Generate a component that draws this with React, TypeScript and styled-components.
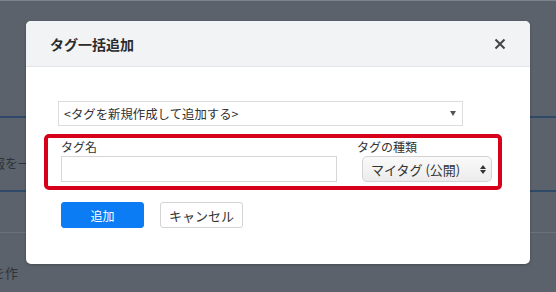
import React from "react";
import styled, { createGlobalStyle } from "styled-components";

const Global = createGlobalStyle`
  html, body { margin: 0; padding: 0; }
  body {
    width: 556px; height: 292px; overflow: hidden;
    font-family: "Noto Sans CJK JP", "Liberation Sans", sans-serif;
  }
`;

const Page = styled.div`
  position: relative;
  width: 556px;
  height: 292px;
  background: #5c626b;
  border-top: 1px solid #7d838b;
  box-sizing: border-box;
  overflow: hidden;
`;

const BgContent = styled.div`
  display: flex;
  flex-direction: column;
  padding-top: 115px;
`;

const BgLine = styled.div<{ $color: string; $h?: number }>`
  height: ${(p) => p.$h ?? 2}px;
  background: ${(p) => p.$color};
`;

const BgText = styled.div<{ $h: number; $pad?: number }>`
  height: ${(p) => p.$h}px;
  box-sizing: border-box;
  padding-top: ${(p) => p.$pad ?? 0}px;
  display: flex;
  align-items: center;
  font-size: 13px;
  color: #2f3338;
  margin-left: -8px;
`;

const Modal = styled.div`
  position: absolute;
  left: 26px;
  top: 20px;
  width: 504px;
  height: 243px;
  background: #fff;
  border-radius: 5px;
  overflow: hidden;
  display: flex;
  flex-direction: column;
  box-shadow: 0 1px 3px rgba(0, 0, 0, 0.25);
`;

const Header = styled.div`
  height: 45px;
  flex: none;
  background: #f2f3f5;
  border-bottom: 1px solid #e3e5e8;
  display: flex;
  align-items: center;
  justify-content: space-between;
  padding: 0 24px 0 24px;
`;

const Title = styled.div`
  font-size: 14px;
  font-weight: 700;
  color: #2b2b2b;
`;

const Close = styled.button`
  border: 0;
  background: none;
  padding: 0;
  width: 12px;
  height: 12px;
  display: flex;
`;

const Body = styled.div`
  display: flex;
  flex-direction: column;
  padding: 34px 28px 0 18px;
`;

const TagSelect = styled.div`
  margin-left: 14px;
  width: 405px;
  height: 25px;
  box-sizing: border-box;
  border: 1px solid #dcdcdc;
  display: flex;
  align-items: center;
  justify-content: space-between;
  padding: 0 6px 0 5px;
  font-size: 12.4px;
  color: #333;
`;

const Caret = styled.span`
  width: 0;
  height: 0;
  border-left: 3.5px solid transparent;
  border-right: 3.5px solid transparent;
  border-top: 5px solid #555;
`;

const Highlight = styled.div`
  margin-top: 8px;
  width: 458px;
  height: 56px;
  box-sizing: border-box;
  border: 4px solid #d7001a;
  border-radius: 5px;
  display: flex;
  gap: 20px;
  padding: 0 6px 0 13px;
`;

const Field = styled.div<{ $w: number }>`
  width: ${(p) => p.$w}px;
  display: flex;
  flex-direction: column;
`;

const Label = styled.div`
  height: 18px;
  font-size: 12px;
  line-height: 18px;
  color: #333;
`;

const TextInput = styled.div`
  height: 26px;
  box-sizing: border-box;
  border: 1px solid #d6d6d6;
  background: #fff;
`;

const TypeSelect = styled.div`
  margin-left: 5px;
  height: 26px;
  box-sizing: border-box;
  border: 1px solid #d3d3d3;
  border-radius: 5px;
  background: linear-gradient(#fafafa, #ececec);
  display: flex;
  align-items: center;
  justify-content: space-between;
  padding: 0 5px 0 8px;
  font-size: 13px;
  color: #333;
`;

const UpDown = styled.span`
  display: flex;
  flex-direction: column;
  gap: 1px;
`;

const Tri = styled.span<{ $up?: boolean }>`
  width: 0;
  height: 0;
  border-left: 3px solid transparent;
  border-right: 3px solid transparent;
  ${(p) => (p.$up ? "border-bottom: 4px solid #333;" : "border-top: 4px solid #333;")}
`;

const Buttons = styled.div`
  display: flex;
  gap: 16px;
  margin-top: 12px;
  padding-left: 17px;
`;

const Button = styled.button<{ $primary?: boolean }>`
  width: 83px;
  height: 26px;
  box-sizing: border-box;
  border-radius: 3px;
  font-family: inherit;
  padding: 0;
  border: 1px solid ${(p) => (p.$primary ? "#0b7cf4" : "#d4d4d4")};
  background: ${(p) => (p.$primary ? "#0b7cf4" : "#fff")};
  color: ${(p) => (p.$primary ? "#fff" : "#333")};
  font-size: ${(p) => (p.$primary ? 12 : 13)}px;
`;

export default function App() {
  return (
    <>
      <Global />
      <Page>
        <BgContent>
          <BgLine $color="#2e4a68" />
          <BgText $h={72} $pad={16}>報を一</BgText>
          <BgLine $color="#2e4a68" />
          <BgText $h={40} />
          <BgLine $color="#6c727b" $h={1} />
          <BgText $h={78}>を作</BgText>
        </BgContent>
        <Modal>
          <Header>
            <Title>タグ一括追加</Title>
            <Close aria-label="close">
              <svg width="12" height="12" viewBox="0 0 12 12">
                <path d="M1.5 1.5L10.5 10.5M10.5 1.5L1.5 10.5" stroke="#444" strokeWidth="2" />
              </svg>
            </Close>
          </Header>
          <Body>
            <TagSelect>
              <span>&lt;タグを新規作成して追加する&gt;</span>
              <Caret />
            </TagSelect>
            <Highlight>
              <Field $w={276}>
                <Label>タグ名</Label>
                <TextInput />
              </Field>
              <Field $w={135}>
                <Label>タグの種類</Label>
                <TypeSelect>
                  <span>マイタグ (公開)</span>
                  <UpDown>
                    <Tri $up />
                    <Tri />
                  </UpDown>
                </TypeSelect>
              </Field>
            </Highlight>
            <Buttons>
              <Button $primary>追加</Button>
              <Button>キャンセル</Button>
            </Buttons>
          </Body>
        </Modal>
      </Page>
    </>
  );
}
